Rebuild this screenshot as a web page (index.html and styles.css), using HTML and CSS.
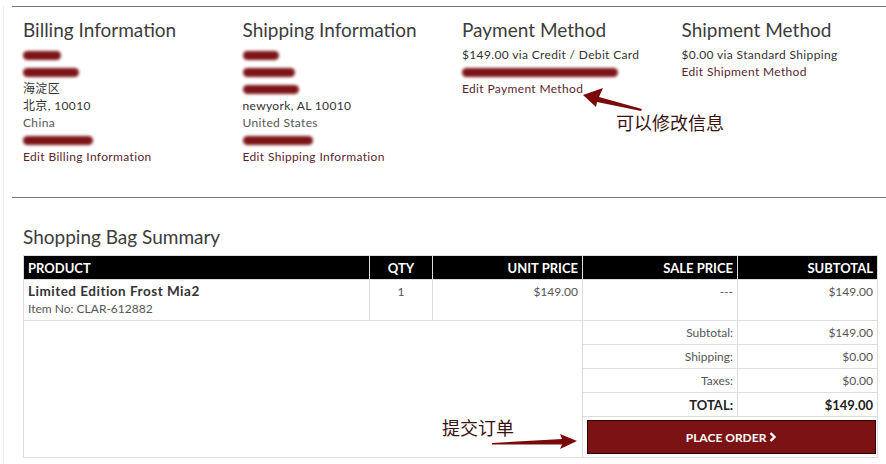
FILE: index.html
```html
<!DOCTYPE html>
<html lang="en">

<head>
    <meta charset="UTF-8">
    <title>Review Order</title>
    <link rel="stylesheet" href="styles.css">
</head>

<body>
    <div class="page">
        <!-- Order details -->
        <section class="details">
            <div class="col">
                <h2>Billing Information</h2>
                <p><span class="redact w38"></span></p>
                <p><span class="redact w56"></span></p>
                <p>海淀区</p>
                <p>北京, 10010</p>
                <p class="muted">China</p>
                <p><span class="redact w70"></span></p>
                <p><a class="edit">Edit Billing Information</a></p>
            </div>
            <div class="col">
                <h2>Shipping Information</h2>
                <p><span class="redact w36"></span></p>
                <p><span class="redact w52"></span></p>
                <p><span class="redact w56"></span></p>
                <p>newyork, AL 10010</p>
                <p class="muted">United States</p>
                <p><span class="redact w70"></span></p>
                <p><a class="edit">Edit Shipping Information</a></p>
            </div>
            <div class="col">
                <h2>Payment Method</h2>
                <p>$149.00 via Credit / Debit Card</p>
                <p><span class="redact w156"></span></p>
                <p><a class="edit">Edit Payment Method</a></p>
            </div>
            <div class="col">
                <h2>Shipment Method</h2>
                <p>$0.00 via Standard Shipping</p>
                <p><a class="edit">Edit Shipment Method</a></p>
            </div>
        </section>

        <!-- Bag summary -->
        <section class="summary">
            <h2>Shopping Bag Summary</h2>
            <table class="bag">
                <colgroup>
                    <col class="c-product">
                    <col class="c-qty">
                    <col class="c-unit">
                    <col class="c-sale">
                    <col class="c-sub">
                </colgroup>
                <thead>
                    <tr>
                        <th class="left">PRODUCT</th>
                        <th class="center">QTY</th>
                        <th>UNIT PRICE</th>
                        <th>SALE PRICE</th>
                        <th>SUBTOTAL</th>
                    </tr>
                </thead>
                <tbody>
                    <tr class="item">
                        <td class="left">
                            <div class="name">Limited Edition Frost Mia2</div>
                            <div>Item No: CLAR-612882</div>
                        </td>
                        <td class="center">1</td>
                        <td>$149.00</td>
                        <td>---</td>
                        <td>$149.00</td>
                    </tr>
                    <tr class="sum">
                        <td class="blank" colspan="3" rowspan="5"></td>
                        <td>Subtotal:</td>
                        <td>$149.00</td>
                    </tr>
                    <tr class="sum">
                        <td>Shipping:</td>
                        <td>$0.00</td>
                    </tr>
                    <tr class="sum">
                        <td>Taxes:</td>
                        <td>$0.00</td>
                    </tr>
                    <tr class="sum total">
                        <td>TOTAL:</td>
                        <td>$149.00</td>
                    </tr>
                    <tr class="actions">
                        <td colspan="2">
                            <button class="place-order">PLACE ORDER
                                <svg width="8" height="10" viewBox="0 0 8 10"><path d="M1.5 1 L5.5 5 L1.5 9" fill="none" stroke="#fff" stroke-width="2.4"/></svg>
                            </button>
                        </td>
                    </tr>
                </tbody>
            </table>
        </section>

        <!-- Annotations -->
        <div class="note note-edit">可以修改信息</div>
        <div class="note note-submit">提交订单</div>
        <svg class="arrows" width="886" height="464" viewBox="0 0 886 464">
            <polygon points="583,89 603,82 599,91 642,103 641,105 597,96 596,101" fill="#7a0a0a"/>
            <polygon points="492,437 562,433 560,428 577,435 560,443 562,438.5 492,438.5" fill="#7a0a0a"/>
        </svg>
    </div>
</body>

</html>
```

FILE: styles.css
```css
body {
    margin: 0;
    background: #fff;
    font-family: Lato, "Noto Sans CJK SC", sans-serif;
    color: #333;
}

.page {
    position: relative;
    margin-left: 3px;
    padding-left: 8px;
    border-left: 1px solid #ececec;
    height: 464px;
    box-sizing: border-box;
}

h2 {
    margin: 0;
    font-size: 19px;
    font-weight: 400;
    line-height: 24px;
    color: #3c3c3c;
}

/* details */
.details {
    margin-top: 6px;
    height: 192px;
    box-sizing: border-box;
    border-top: 1px solid #777;
    border-bottom: 1px solid #777;
    padding: 11px 0 0 11px;
    display: grid;
    grid-template-columns: repeat(4, 219.5px);
}

.details h2 {
    margin-bottom: 4px;
}

.details p {
    margin: 0;
    font-size: 12px;
    line-height: 17px;
    letter-spacing: 0.35px;
}

.muted {
    color: #555;
}

.edit {
    color: #5a1f2e;
    cursor: pointer;
}

.redact {
    display: inline-block;
    height: 9px;
    vertical-align: middle;
    background: #7d1518;
    border-radius: 5px;
    filter: blur(1.4px);
}

.w36 { width: 36px; }
.w38 { width: 38px; }
.w52 { width: 52px; }
.w56 { width: 56px; }
.w70 { width: 70px; }
.w156 { width: 156px; }

/* summary */
.summary {
    padding: 27px 0 0 11px;
}

.summary h2 {
    margin-bottom: 6px;
}

.bag {
    width: 854px;
    table-layout: fixed;
    border-collapse: collapse;
    border: 1px solid #ddd;
    font-size: 12px;
    color: #555;
}

.c-product { width: 346px; }
.c-qty { width: 63px; }
.c-unit { width: 150px; }
.c-sale { width: 155px; }
.c-sub { width: 140px; }

.bag th,
.bag td {
    border: 1px solid #ddd;
    padding: 0 4px;
    text-align: right;
}

.bag th {
    background: #000;
    color: #fff;
    font-size: 13px;
    font-weight: 700;
    height: 23px;
}

.bag .left {
    text-align: left;
}

.bag .center {
    text-align: center;
}

.item td {
    height: 37px;
    vertical-align: top;
    padding-top: 3px;
    line-height: 17px;
}

.item .name {
    font-size: 13.5px;
    font-weight: 700;
    letter-spacing: 0.5px;
    color: #333;
}

.sum td {
    height: 23px;
}

.total td {
    font-size: 13px;
    font-weight: 700;
    color: #222;
}

.actions td {
    height: 34px;
    padding: 3px 1px 3px 4px;
}

.place-order {
    width: 100%;
    height: 34px;
    background: #7b1315;
    border: 1px solid #2b0505;
    color: #fff;
    font-family: Lato, sans-serif;
    font-size: 12px;
    font-weight: 700;
    cursor: pointer;
}

/* annotations */
.note {
    position: absolute;
    font-family: "Noto Sans CJK SC", sans-serif;
    font-size: 18px;
    line-height: 18px;
    color: #3a1212;
}

.note-edit {
    left: 612px;
    top: 107px;
}

.note-submit {
    left: 438px;
    top: 412px;
}

.arrows {
    position: absolute;
    left: -4px;
    top: 0;
    pointer-events: none;
}
```
